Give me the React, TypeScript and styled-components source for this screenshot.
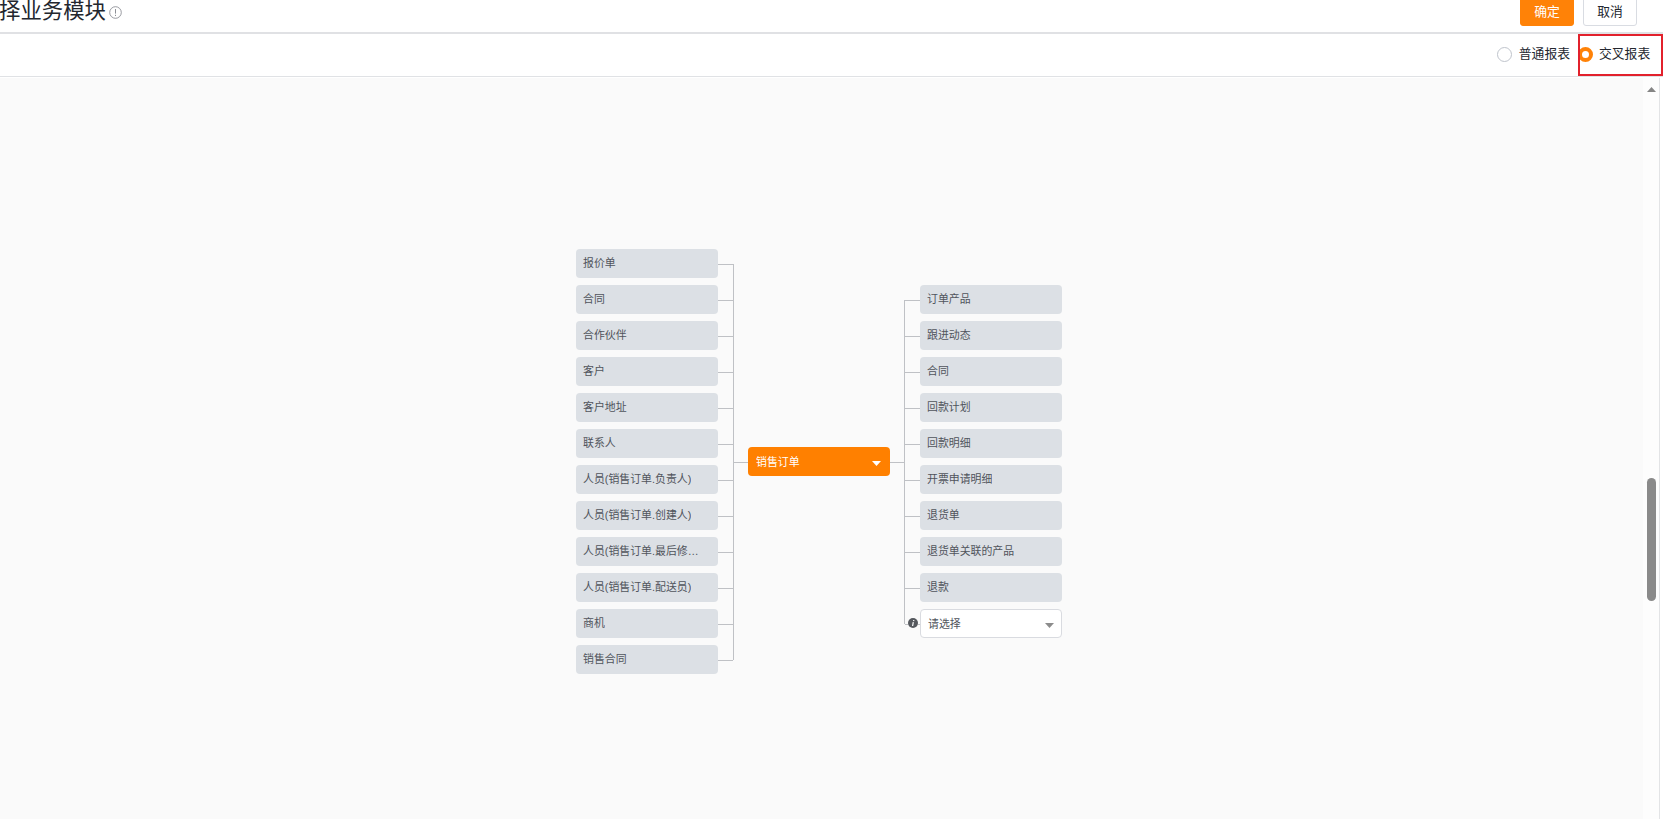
import React from "react";
import styled, { createGlobalStyle, css } from "styled-components";

const Global = createGlobalStyle`
  html, body { margin: 0; padding: 0; background: #fff; overflow: hidden; }
  * { box-sizing: border-box; }
  body { font-family: "Liberation Sans", "Noto Sans CJK SC", sans-serif; color: #23272f; }
`;

const Page = styled.div`
  width: 1663px;
  height: 819px;
  display: flex;
  flex-direction: column;
  overflow: hidden;
`;

const Header = styled.header`
  height: 34px;
  flex: none;
  display: flex;
  align-items: flex-start;
  justify-content: space-between;
  padding-right: 26px;
  border-bottom: 2px solid #e0e1e4;
`;

const TitleGroup = styled.div`
  display: flex;
  align-items: flex-start;
`;

const Title = styled.h1`
  margin: -4px 0 0 -1px;
  font-size: 21.4px;
  line-height: 30px;
  font-weight: 400;
  white-space: nowrap;
`;

const HintIcon = styled.svg`
  margin: 6px 0 0 3px;
`;

const Actions = styled.div`
  display: flex;
  gap: 9px;
`;

const Button = styled.button<{ $primary?: boolean }>`
  width: 54px;
  height: 29px;
  margin-top: -3px;
  padding: 0 0 1px;
  border: 1px solid ${(p) => (p.$primary ? "#ff8207" : "#d9dce2")};
  border-radius: 3px;
  background: ${(p) => (p.$primary ? "#ff8207" : "#fff")};
  color: ${(p) => (p.$primary ? "#fff" : "#23272f")};
  font: 400 12.8px/26px "Noto Sans CJK SC", sans-serif;
`;

const TypeBar = styled.div`
  height: 43px;
  flex: none;
  display: flex;
  justify-content: flex-end;
  align-items: flex-start;
  gap: 8px;
  border-bottom: 1px solid #e0e2e5;
`;

const RadioLabel = styled.label<{ $marked?: boolean }>`
  display: flex;
  align-items: center;
  height: 42px;
  padding-bottom: 2px;
  font-size: 12.8px;
  line-height: 20px;
  white-space: nowrap;
  gap: 7px;
  ${(p) =>
    p.$marked &&
    css`
      width: 85px;
      border: 2px solid #e2212c;
      gap: 6px;
    `}
`;

const RadioDot = styled.span<{ $checked?: boolean }>`
  width: 15px;
  height: 15px;
  flex: none;
  border-radius: 50%;
  background: #fff;
  border: ${(p) => (p.$checked ? "4px solid #ff8207" : "1px solid #bfc4cc")};
  margin-left: ${(p) => (p.$checked ? "-2px" : "0")};
`;

const RadioClip = styled.span`
  display: flex;
  overflow: hidden;
  flex: none;
`;

const Body = styled.main`
  flex: 1;
  min-height: 0;
  display: flex;
`;

const Canvas = styled.section`
  width: 1643px;
  margin-top: 1px;
  background: #fafafa;
  display: flex;
  align-items: flex-start;
  padding: 171px 0 0 576px;
`;

const Column = styled.div<{ $offset?: number }>`
  display: flex;
  flex-direction: column;
  gap: 7px;
  margin-top: ${(p) => p.$offset ?? 0}px;
`;

const Row = styled.div`
  display: flex;
  align-items: center;
  height: 29px;
`;

const Stub = styled.span<{ $width: number }>`
  width: ${(p) => p.$width}px;
  height: 1px;
  margin-top: 2px;
  background: #bfc1c5;
`;

const Trunk = styled.span<{ $top: number; $height: number }>`
  width: 1px;
  height: ${(p) => p.$height}px;
  margin-top: ${(p) => p.$top}px;
  background: #bfc1c5;
`;

const Node = styled.div<{ $kind?: "root" | "select" }>`
  width: 142px;
  height: 29px;
  flex: none;
  display: flex;
  align-items: center;
  justify-content: space-between;
  padding: 0 8px 1px 7px;
  border-radius: 4px;
  background: #dce0e5;
  color: #50545c;
  font-size: 10.9px;
  line-height: 20px;
  ${(p) =>
    p.$kind === "root" &&
    css`
      background: #ff8000;
      color: #fff;
      padding: 1px 9px 0 8px;
    `}
  ${(p) =>
    p.$kind === "select" &&
    css`
      background: #fff;
      border: 1px solid #d9dbe0;
      padding: 0 7px 0 7px;
    `}
`;

const NodeText = styled.span`
  overflow: hidden;
  white-space: nowrap;
  text-overflow: ellipsis;
`;

const Caret = styled.svg`
  flex: none;
  margin-top: 3px;
`;

const InfoMark = styled.svg`
  flex: none;
  margin: -1px 0 0;
`;

const ScrollTrack = styled.aside`
  width: 17px;
  flex: none;
  margin-top: 1px;
  display: flex;
  flex-direction: column;
  align-items: center;
  border-right: 1px solid #e3e4e6;
  background: #fdfdfd;
  padding-top: 9px;
`;

const ScrollThumb = styled.span`
  width: 9px;
  height: 123px;
  margin-top: 386px;
  border-radius: 5px;
  background: #8a8a8a;
`;

const parents = [
  "报价单",
  "合同",
  "合作伙伴",
  "客户",
  "客户地址",
  "联系人",
  "人员(销售订单.负责人)",
  "人员(销售订单.创建人)",
  "人员(销售订单.最后修…",
  "人员(销售订单.配送员)",
  "商机",
  "销售合同",
];

const children = [
  "订单产品",
  "跟进动态",
  "合同",
  "回款计划",
  "回款明细",
  "开票申请明细",
  "退货单",
  "退货单关联的产品",
  "退款",
];

const DownCaret = ({ color }: { color: string }) => (
  <Caret width="9" height="5" viewBox="0 0 9 5">
    <path d="M0 0H9L4.5 5Z" fill={color} />
  </Caret>
);

export default function App() {
  return (
    <Page>
      <Global />
      <Header>
        <TitleGroup>
          <Title>择业务模块</Title>
          <HintIcon width="13" height="13" viewBox="0 0 13 13" fill="none" stroke="#8d9096">
            <circle cx="6.5" cy="6.5" r="5.8" strokeWidth="0.9" />
            <path d="M6.5 3V7.6M6.5 8.8V10" strokeWidth="1" />
          </HintIcon>
        </TitleGroup>
        <Actions>
          <Button $primary>确定</Button>
          <Button>取消</Button>
        </Actions>
      </Header>
      <TypeBar>
        <RadioLabel>
          <RadioDot />
          普通报表
        </RadioLabel>
        <RadioLabel $marked>
          <RadioClip>
            <RadioDot $checked />
          </RadioClip>
          交叉报表
        </RadioLabel>
      </TypeBar>
      <Body>
        <Canvas>
          <Column>
            {parents.map((name) => (
              <Row key={name}>
                <Node>
                  <NodeText>{name}</NodeText>
                </Node>
                <Stub $width={15} />
              </Row>
            ))}
          </Column>
          <Trunk $top={15} $height={396} />
          <Column $offset={198}>
            <Row>
              <Stub $width={14} />
              <Node $kind="root">
                <NodeText>销售订单</NodeText>
                <DownCaret color="#fff" />
              </Node>
              <Stub $width={14} />
            </Row>
          </Column>
          <Trunk $top={51} $height={324} />
          <Column $offset={36}>
            {children.map((name) => (
              <Row key={name}>
                <Stub $width={15} />
                <Node>
                  <NodeText>{name}</NodeText>
                </Node>
              </Row>
            ))}
            <Row>
              <Stub $width={3} />
              <InfoMark width="10" height="10" viewBox="0 0 10 10">
                <circle cx="5" cy="5" r="5" fill="#55585d" />
                <path d="M5.8 2L5.6 3.1M5.3 4.2L4.6 8" stroke="#fff" strokeWidth="1.2" />
              </InfoMark>
              <Stub $width={2} />
              <Node $kind="select">
                <NodeText>请选择</NodeText>
                <DownCaret color="#8c8c8c" />
              </Node>
            </Row>
          </Column>
        </Canvas>
        <ScrollTrack>
          <svg width="9" height="5" viewBox="0 0 9 5">
            <path d="M0 5H9L4.5 0Z" fill="#858585" />
          </svg>
          <ScrollThumb />
        </ScrollTrack>
      </Body>
    </Page>
  );
}
